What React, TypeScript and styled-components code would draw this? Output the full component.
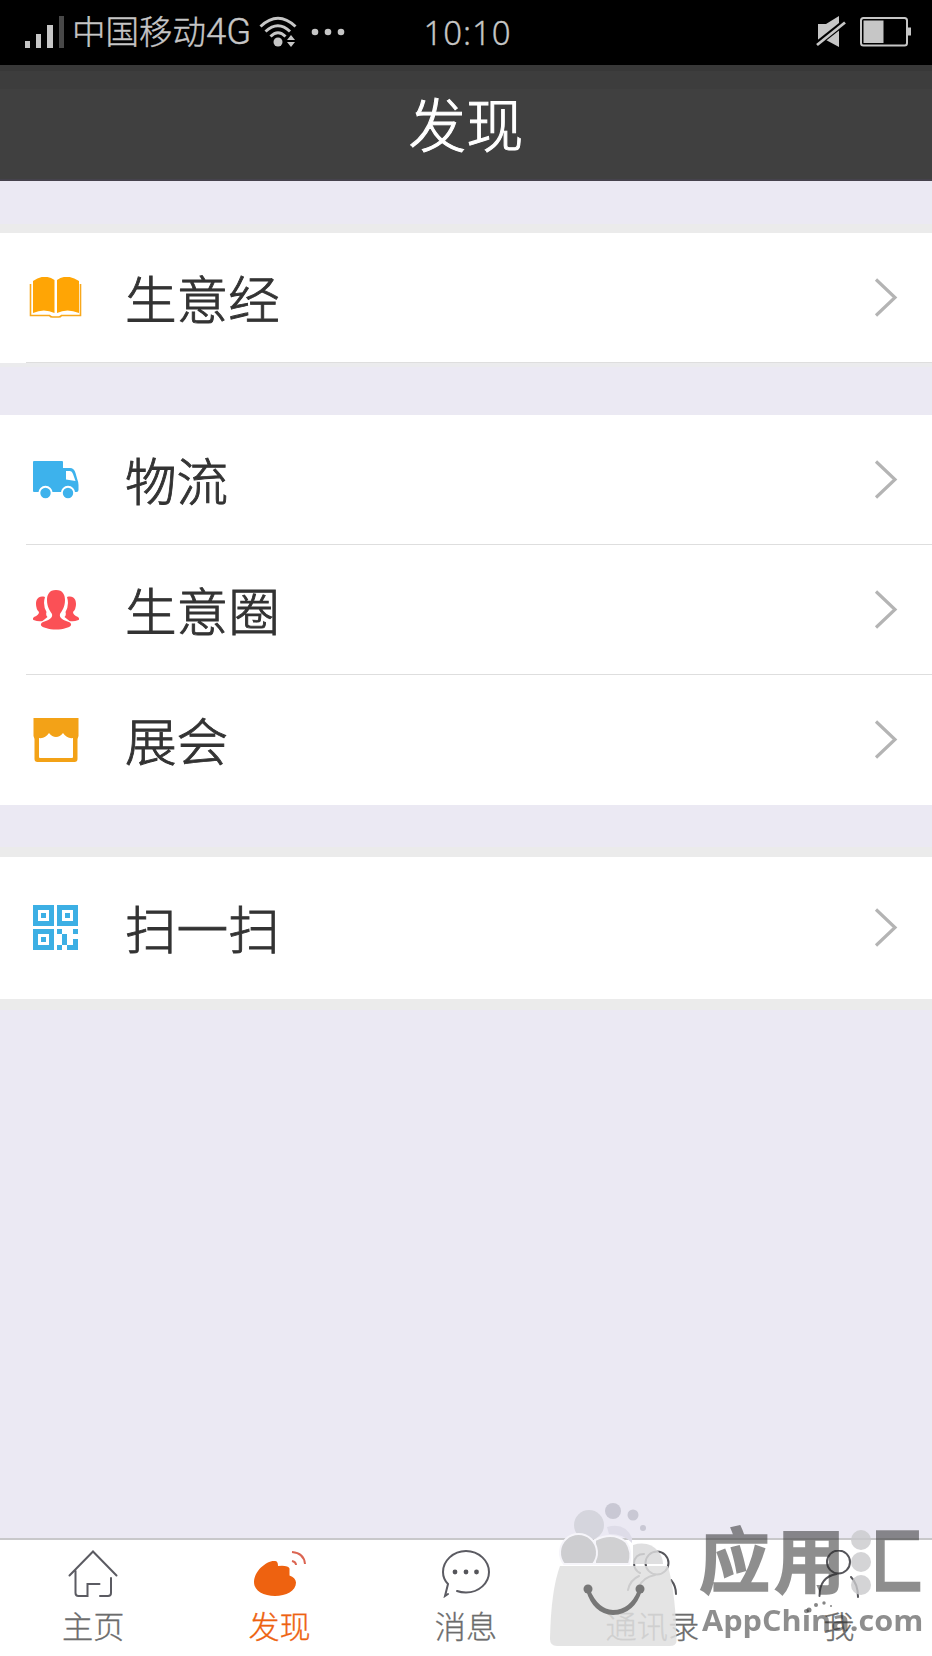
import React from 'react';
import styled, { createGlobalStyle } from 'styled-components';

const Global = createGlobalStyle`
  * { box-sizing: border-box; }
  body { margin: 0; background: #ebe9f3; font-family: "Noto Sans CJK SC", "Noto Sans", sans-serif; }
`;

const Screen = styled.div`
  position: relative;
  width: 932px;
  height: 1656px;
  display: flex;
  flex-direction: column;
  background: #ebe9f3;
  overflow: hidden;
`;

const StatusBar = styled.header`
  height: 65px;
  flex: none;
  display: grid;
  grid-template-columns: 1fr auto 1fr;
  align-items: center;
  padding: 0 20px 1px 24px;
  background: #000;
  color: #c6c6c6;
`;

const StatusSide = styled.div<{ $end?: boolean }>`
  display: flex;
  align-items: center;
  justify-content: ${(p) => (p.$end ? 'flex-end' : 'flex-start')};
  gap: ${(p) => (p.$end ? '14px' : '8px')};
`;

const Carrier = styled.span`
  font-size: 33.5px;
  line-height: 60px;
  font-weight: 300;
  white-space: nowrap;
  padding-bottom: 2px;
  -webkit-text-stroke: 0.4px currentColor;
  span { font-family: Roboto, sans-serif; font-size: 36.5px; }
`;

const Clock = styled.time`
  font-family: "Noto Sans", sans-serif;
  font-weight: 300;
  font-size: 33px;
  line-height: 62px;
  letter-spacing: 0.9px;
  margin-right: 1px;
  padding-top: 2px;
  -webkit-text-stroke: 0.3px currentColor;
`;

const TitleBar = styled.div`
  height: 116px;
  flex: none;
  display: flex;
  justify-content: center;
  background: linear-gradient(#383838 0 6px, #3d3d3d 6px 24px, #404040 24px);
  border-bottom: 2px solid #45424c;
`;

const Title = styled.h1`
  margin: 0;
  font-size: 57.5px;
  font-weight: 300;
  line-height: 115px;
  color: #fff;
  -webkit-text-stroke: 1px #fff;
`;

const Main = styled.main`
  flex: 1;
  display: flex;
  flex-direction: column;
`;

const Gap = styled.div<{ $before: number; $after: number }>`
  height: 52px;
  flex: none;
  border-top: ${(p) => p.$before}px solid #ebebed;
  border-bottom: ${(p) => p.$after}px solid #ebebeb;
`;

const Card = styled.section`
  background: #fff;
`;

const Rest = styled.div`
  flex: 1;
  border-top: 11px solid #ebebeb;
`;

const Row = styled.div<{ $h: number; $line?: boolean }>`
  height: ${(p) => p.$h}px;
  display: grid;
  grid-template-columns: 59px 1fr 24px;
  column-gap: 40px;
  align-items: center;
  padding: 0 34px 0 26px;
  background: ${(p) =>
    p.$line ? 'linear-gradient(#dedede, #dedede) 26px 100% / 100% 1.5px no-repeat' : 'none'};
  svg { display: block; }
`;

const Label = styled.span`
  font-size: 51.6px;
  line-height: 76px;
  font-weight: 300;
  color: #333;
  margin-top: -2px;
  -webkit-text-stroke: 0.9px #333;
`;

const IconSlot = styled.span`
  display: flex;
  justify-content: center;
  margin-top: -1px;
`;

const TabBar = styled.nav`
  height: 118px;
  flex: none;
  display: grid;
  grid-template-columns: repeat(5, 1fr);
  background: #fff;
  border-top: 2px solid #c8c8ca;
`;

const Tab = styled.div<{ $active?: boolean }>`
  display: flex;
  flex-direction: column;
  align-items: center;
  padding-top: 10px;
  font-size: 31.2px;
  font-weight: 300;
  line-height: 46px;
  color: ${(p) => (p.$active ? '#ee6210' : '#6c6c6c')};
  -webkit-text-stroke: 0.3px currentColor;
  svg { display: block; margin-bottom: 4px; }
`;

const Watermark = styled.div`
  position: absolute;
  left: 540px;
  top: 1496px;
  width: 392px;
  height: 160px;
`;

const Bag = styled.svg`
  position: absolute;
  left: 0;
  top: 0;
`;

const Brand = styled.div`
  position: absolute;
  left: 159px;
  top: 14px;
  display: flex;
  font-size: 71px;
  line-height: 92px;
  font-weight: 700;
  letter-spacing: 4px;
  color: #2c2c2c;
  -webkit-text-stroke: 1.6px #2c2c2c;
  opacity: 0.53;
`;

const BrandTail = styled.span`
  margin-left: 2px;
  color: transparent;
  -webkit-text-stroke: 1.6px transparent;
  background: linear-gradient(90deg, transparent 33%, #2c2c2c 33%);
  background-clip: text;
  -webkit-background-clip: text;
`;

const Site = styled.div`
  position: absolute;
  left: 162px;
  top: 106px;
  font-family: "Open Sans", "Noto Sans", sans-serif;
  font-size: 28px;
  line-height: 36px;
  font-weight: 700;
  color: #2c2c2c;
  opacity: 0.53;
  white-space: nowrap;
  transform: scaleX(1.095);
  transform-origin: 0 0;
`;

const Signal = () => (
  <svg width="40" height="34" viewBox="0 0 40 34" fill="#c6c6c6">
    <path d="M1 26h5v7H1zM12 19h5v14h-5zM23 10h6v23h-6z" />
    <path d="M35 1h5v32h-5z" fill="#484848" />
  </svg>
);

const Wifi = () => (
  <svg width="38" height="32" viewBox="0 0 38 32" fill="none" stroke="#c6c6c6" strokeWidth="3">
    <path d="M1.500 10.500Q19-6 36.500 10.500M6.500 15.500Q19 4 31 15.500M11.500 20.500Q19 13 26.500 20.500" />
    <circle cx="19" cy="26" r="4.500" fill="#c6c6c6" stroke="none" />
    <path d="M28 24l4-5 4 5zM28 26l4 5 4-5z" fill="#c6c6c6" stroke="none" />
  </svg>
);

const Dots = () => (
  <svg width="40" height="8" viewBox="-6 0 40 8" fill="#c6c6c6">
    <circle cx="4" cy="4" r="3.300" /><circle cx="17" cy="4" r="3.300" /><circle cx="30" cy="4" r="3.300" />
  </svg>
);

const Muted = () => (
  <svg width="30" height="32" viewBox="0 0 30 32" fill="#c6c6c6">
    <path d="M2 8h8L23 0v31L10 24H2z" />
    <path d="M0 29L29 6" stroke="#000" strokeWidth="6" />
    <path d="M1 29L29 6.500" stroke="#c6c6c6" strokeWidth="2.800" />
  </svg>
);

const Battery = () => (
  <svg width="52" height="30" viewBox="0 0 52 30">
    <rect x="1" y="1" width="46" height="27.500" rx="2.500" fill="none" stroke="#c6c6c6" strokeWidth="2" />
    <path d="M3.500 3.500h20v22.500h-20zM48 10.500h3v8h-3z" fill="#c6c6c6" />
  </svg>
);

const Chevron = () => (
  <svg width="24" height="42" viewBox="0 0 24 42" fill="none" stroke="#b4b4b4" strokeWidth="3.200">
    <path d="M2 2.500l19 18L2 38.500" />
  </svg>
);

const Book = () => (
  <svg width="53" height="42" viewBox="0 0 53 42">
    <path d="M4 4Q15-4 25.500 3v33Q15 31 4 36zM28 3Q38-4 50 4v32Q38 31 28 36z" fill="#ffa505" />
    <path d="M1.500 7v31.500h19q1 1.500 3 1.500h6q2 0 3-1.500h19v-31.500" fill="none" stroke="#f8a81c" strokeWidth="1.600" />
  </svg>
);

const Truck = () => (
  <svg width="46" height="38" viewBox="0 0 46 38">
    <path d="M1 0h28q1 0 1 1v6h7q4 0 5.500 5l2 7q1 2 1 5v5q0 2-2 2H1q-1 0-1-1V1q0-1 1-1z" fill="#3db2ec" />
    <path d="M33 10h4q2 0 3 3l2.500 7-9.500-1.500z" fill="#fff" />
    <g fill="#3db2ec" stroke="#fff" strokeWidth="2"><circle cx="12.500" cy="32" r="6.200" /><circle cx="35" cy="32" r="6.200" /></g>
  </svg>
);

const Group = () => (
  <svg width="46" height="40" viewBox="0 0 46 40" fill="#fb5056">
    <path d="M12 7C5 5 3 10 3 14q0 5 3 8 0 3-5 5-2 2-.500 3 5 2 9 1l5-4q-2-2-1-5-4-7-1.500-15z" />
    <path d="M34 7c7-2 9 3 9 7q0 5-3 8 0 3 5 5 2 2 .500 3-5 2-9 1l-5-4q2-2 1-5 4-7 1.500-15z" />
    <path d="M23 0c-7 0-9 5-9 10 0 7 3 11 5 14 1 4-3 6-9 8-4 2-2 5 3 6 6 2 14 2 20 0 5-1 7-4 3-6-6-2-10-4-9-8 2-3 5-7 5-14 0-5-2-10-9-10z" />
  </svg>
);

const Shop = () => (
  <svg width="46" height="46" viewBox="0 0 46 46">
    <path d="M.500 1h45v18l-1 3v20q0 3-3 3h-37q-3 0-3-3V22l-1-3z" fill="#f3a217" />
    <path d="M6 21q6 1 10-5 3 4 7 4t7-4q4 6 10 5v19q0 1-1 1h-32q-1 0-1-1z" fill="#fff" />
  </svg>
);

const Qr = () => (
  <svg width="45" height="45" viewBox="0 0 45 45" fill="#3cafe4">
    <path fillRule="evenodd" d="M0 0h21v21H0zM5 5v11h11V5zM24 0h21v21H24zM29 5v11h11V5zM0 24h21v21H0zM5 29v11h11V29z" />
    <path d="M8 8h5v5H8zM32 8h5v5h-5zM8 32h5v5H8zM24 24h5v5h-5zM40 24h5v5h-5zM29 29h5v11h-5zM24 40h5v5h-5zM34 40h6v-6h5v11H34z" />
  </svg>
);

const Home = () => (
  <svg width="50" height="48" viewBox="0 0 50 48" fill="none" stroke="#5b5b62" strokeWidth="2" strokeLinecap="round">
    <path d="M1.500 25.500L25 1.500l23.500 24M7.500 21v22q0 3 3 3h9V34h12M43 28v15q0 3-3 3h-8" />
  </svg>
);

const Discover = () => (
  <svg width="54" height="48" viewBox="0 0 54 48">
    <path d="M1 32C1 21 14 10 22 11q3 0 3 5 10-1 11.500 2.500v7q6 2 6.500 7C43 41 33 46 22 46S1 41 1 32z" fill="#ee6210" />
    <path d="M39 2q12 1 13 12M39 11q4 1 4 4" fill="none" stroke="#db6552" strokeWidth="2" />
  </svg>
);

const Chat = () => (
  <svg width="48" height="48" viewBox="0 0 48 48" fill="none" stroke="#5b5b62" strokeWidth="2" strokeLinecap="round">
    <path d="M15 41Q19 42.500 24 42.500C37 42.500 47 33 47 22S37 1 24 1 1 11 1 22q0 7 5 12L3 46l3-2" />
    <g fill="#55555a" stroke="none"><circle cx="13" cy="22" r="2.400" /><circle cx="24" cy="22" r="2.400" /><circle cx="34.500" cy="22" r="2.400" /></g>
  </svg>
);

const Contacts = () => (
  <svg width="50" height="48" viewBox="0 0 50 48" fill="none" stroke="#55555a" strokeWidth="2" strokeLinecap="round">
    <circle cx="30" cy="13" r="11.500" />
    <path d="M17 4q-9 0-10 9 0 7 6 10M1 40q2-10 11-14M11 38q5-11 17-13M44 30q5 6 5 14" />
  </svg>
);

const Me = () => (
  <svg width="42" height="48" viewBox="0 0 42 48" fill="none" stroke="#55555a" strokeWidth="2" strokeLinecap="round">
    <circle cx="20.500" cy="12" r="11.500" />
    <path d="M1.500 46q0-19 17-22M33 27q7 7 7 20" />
  </svg>
);

const BagArt = () => (
  <Bag width="392" height="160" viewBox="0 0 392 160">
    <g fill="#c9c8d4">
      <circle cx="49" cy="29" r="15" fill="#d5d5dd" /><circle cx="73" cy="15" r="8" /><circle cx="93" cy="19" r="5.500" /><circle cx="103" cy="32" r="3" />
      <path d="M67 31q18-5 25 11v5q-8-9-23-9z" fill="#dedce8" />
      <path d="M93 68V49q16-5 26 7 4 6 4 12z" fill="#d9d9db" fillOpacity=".85" />
      <path d="M55 68V44q18-9 31 2 7 10 3 22z" fill="#d0d0d2" stroke="#f6f5fa" strokeWidth="2" />
      <path d="M24 68a18.500 18.500 0 1 1 29 0z" fill="#cdcdd0" stroke="#f6f5fa" strokeWidth="2" />
    </g>
    <path d="M20 70h108q8 30 8.500 75 0 5-7 5H17q-7 0-7-7 1-49 10-73z" fill="#e0e0e0" fillOpacity=".86" />
    <circle cx="48" cy="93" r="4.500" fill="#777" /><circle cx="100" cy="93" r="4.500" fill="#777" />
    <path d="M46 94q7 24 27 25 22-1 29-25h-4q-8 20-25 20-15-1-23-20z" fill="#777" />
    <g fill="#c9c9cc" fillOpacity=".8"><circle cx="321" cy="44" r="10" /><circle cx="321" cy="66" r="10" /><circle cx="321" cy="89" r="10" /></g>
    <g fill="#858585"><circle cx="269" cy="114" r="2.500" /><circle cx="276" cy="109" r="2" /><circle cx="284" cy="107" r="1.700" /><circle cx="291" cy="110" r="1" /></g>
  </Bag>
);

const sections = [
  { before: 0, after: 9, rows: [{ label: '生意经', icon: <Book />, h: 130, line: true }] },
  {
    before: 4,
    after: 0,
    rows: [
      { label: '物流', icon: <Truck />, h: 130, line: true },
      { label: '生意圈', icon: <Group />, h: 130, line: true },
      { label: '展会', icon: <Shop />, h: 130, line: false },
    ],
  },
  { before: 0, after: 10, rows: [{ label: '扫一扫', icon: <Qr />, h: 142, line: false }] },
];

const tabs = [
  { label: '主页', icon: <Home /> },
  { label: '发现', icon: <Discover />, active: true },
  { label: '消息', icon: <Chat /> },
  { label: '通讯录', icon: <Contacts /> },
  { label: '我', icon: <Me /> },
];

export default function App() {
  return (
    <Screen>
      <Global />
      <StatusBar>
        <StatusSide>
          <Signal />
          <Carrier>中国移动<span>4G</span></Carrier>
          <Wifi />
          <Dots />
        </StatusSide>
        <Clock>10:10</Clock>
        <StatusSide $end>
          <Muted />
          <Battery />
        </StatusSide>
      </StatusBar>
      <TitleBar><Title>发现</Title></TitleBar>
      <Main>
        {sections.map((s, i) => (
          <React.Fragment key={i}>
            <Gap $before={s.before} $after={s.after} />
            <Card>
              {s.rows.map((r) => (
                <Row key={r.label} $h={r.h} $line={r.line}>
                  <IconSlot>{r.icon}</IconSlot>
                  <Label>{r.label}</Label>
                  <Chevron />
                </Row>
              ))}
            </Card>
          </React.Fragment>
        ))}
        <Rest />
      </Main>
      <TabBar>
        {tabs.map((t) => (
          <Tab key={t.label} $active={t.active}>
            {t.icon}
            {t.label}
          </Tab>
        ))}
      </TabBar>
      <Watermark>
        <BagArt />
        <Brand>应用<BrandTail>汇</BrandTail></Brand>
        <Site>AppChina.com</Site>
      </Watermark>
    </Screen>
  );
}
